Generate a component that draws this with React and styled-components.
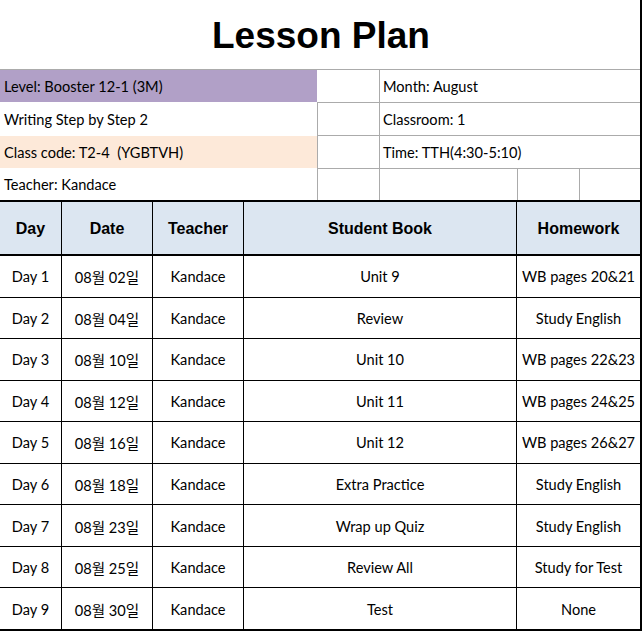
import React from "react";
import styled, { createGlobalStyle } from "styled-components";

const GlobalStyle = createGlobalStyle`
  html, body {
    margin: 0;
    padding: 0;
    background: #fff;
  }
  body {
    font-family: Lato, "Noto Sans CJK KR", sans-serif;
    color: #000;
  }
`;

const info = [
  { label: "Level: Booster 12-1 (3M)", fill: "#b1a0c7", value: "Month: August" },
  { label: "Writing Step by Step 2", fill: "#fff", value: "Classroom: 1" },
  { label: "Class code: T2-4  (YGBTVH)", fill: "#fde9d9", value: "Time: TTH(4:30-5:10)" },
];

const lessons = [
  ["Day 1", "08월 02일", "Unit 9", "WB pages 20&21"],
  ["Day 2", "08월 04일", "Review", "Study English"],
  ["Day 3", "08월 10일", "Unit 10", "WB pages 22&23"],
  ["Day 4", "08월 12일", "Unit 11", "WB pages 24&25"],
  ["Day 5", "08월 16일", "Unit 12", "WB pages 26&27"],
  ["Day 6", "08월 18일", "Extra Practice", "Study English"],
  ["Day 7", "08월 23일", "Wrap up Quiz", "Study English"],
  ["Day 8", "08월 25일", "Review All", "Study for Test"],
  ["Day 9", "08월 30일", "Test", "None"],
];

const Sheet = styled.div`
  width: 642px;
  box-sizing: border-box;
  border-right: 2px solid #000;
`;

const Title = styled.h1`
  margin: 0;
  height: 70px;
  box-sizing: border-box;
  border-bottom: 1px solid #ababab;
  display: flex;
  align-items: center;
  justify-content: center;
  padding-top: 2px;
  padding-left: 2px;
  font-family: "Liberation Sans", Arial, sans-serif;
  font-weight: 700;
  font-size: 37px;
`;

const InfoGrid = styled.div`
  display: grid;
  grid-template-columns: 317px 62px 138px 62px 61px;
  grid-template-rows: 33px 33px 33px 31px;
  font-size: 14.6px;
`;

const Label = styled.div`
  grid-column: 1;
  background: ${(p) => p.$fill || "#fff"};
  display: flex;
  align-items: center;
  padding: 0 4px;
  white-space: pre;
  box-sizing: border-box;
  height: ${(p) => (p.$last ? "31px" : "32px")};
`;

const Cell = styled.div`
  box-sizing: border-box;
  grid-column: ${(p) => p.$span || "auto"};
  border-bottom: ${(p) => (p.$last ? "none" : "1px solid #ababab")};
  border-left: ${(p) => (p.$noLine ? "none" : "1px solid #ababab")};
  display: flex;
  align-items: center;
  padding: 0 3px;
`;

const Table = styled.div`
  display: grid;
  grid-template-columns: 62px 91px 91px 273px 1fr;
  grid-template-rows: 54px repeat(8, 41.55px) 42.55px;
  border-top: 2px solid #000;
  font-size: 14.6px;
`;

const Head = styled.div`
  background: #dce6f1;
  border-bottom: 2px solid #000;
  border-right: ${(p) => (p.$end ? "none" : "2px solid #000")};
  margin-right: ${(p) => (p.$end ? "0" : "-1px")};
  position: relative;
  display: flex;
  align-items: center;
  justify-content: center;
  padding-top: 1px;
  font-family: "Liberation Sans", Arial, sans-serif;
  font-weight: 700;
  font-size: 16px;
`;

const Data = styled.div`
  box-sizing: border-box;
  border-bottom: ${(p) => (p.$last ? "2px" : "1px")} solid #000;
  border-right: ${(p) => (p.$end ? "none" : "1px solid #000")};
  display: flex;
  align-items: center;
  justify-content: center;
  white-space: nowrap;
  padding-top: 1px;
`;

export default function App() {
  return (
    <>
      <GlobalStyle />
      <Sheet>
        <Title>Lesson Plan</Title>
        <InfoGrid>
          {info.map((r, i) => (
            <React.Fragment key={r.label}>
              <Label $fill={r.fill}>{r.label}</Label>
              <Cell $noLine={i === 0} />
              <Cell $span="3 / span 3">{r.value}</Cell>
            </React.Fragment>
          ))}
          <Label $last>Teacher: Kandace</Label>
          <Cell $last />
          <Cell $last />
          <Cell $last />
          <Cell $last />
        </InfoGrid>
        <Table>
          <Head>Day</Head>
          <Head>Date</Head>
          <Head>Teacher</Head>
          <Head>Student Book</Head>
          <Head $end>Homework</Head>
          {lessons.map((l, i) => {
            const last = i === lessons.length - 1;
            return (
              <React.Fragment key={l[0]}>
                <Data $last={last}>{l[0]}</Data>
                <Data $last={last}>{l[1]}</Data>
                <Data $last={last}>Kandace</Data>
                <Data $last={last}>{l[2]}</Data>
                <Data $last={last} $end>{l[3]}</Data>
              </React.Fragment>
            );
          })}
        </Table>
      </Sheet>
    </>
  );
}
